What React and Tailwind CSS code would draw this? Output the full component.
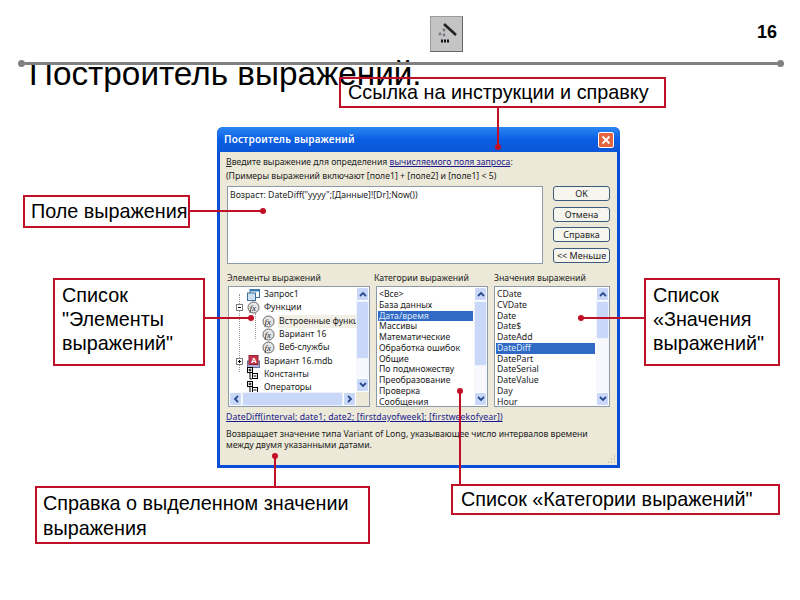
const dlgFont = 'font-["Noto_Sans","Liberation_Sans",sans-serif]'

function Callout({ className, children }) {
  return (
    <div className={`absolute z-20 whitespace-nowrap border-2 border-[#c00f26] text-[19.8px] text-black font-["Liberation_Sans",sans-serif] ${className}`}>
      {children}
    </div>
  )
}

function Dot({ className }) {
  return <div className={`absolute z-30 h-[6px] w-[6px] rounded-full bg-[#c00f26] ${className}`} />
}

function Wire({ className }) {
  return <div className={`absolute z-30 bg-[#c00f26] ${className}`} />
}

function Chevron({ dir }) {
  const d = {
    up: 'M2 7l3-3 3 3',
    down: 'M2 3l3 3 3-3',
    left: 'M7 2L4 5l3 3',
    right: 'M3 2l3 3-3 3'
  }[dir]
  return (
    <svg width="10" height="10" viewBox="0 0 10 10">
      <path d={d} fill="none" stroke="#2a4a8f" strokeWidth="1.8" />
    </svg>
  )
}

function ScrollBtn({ dir }) {
  return (
    <div className="flex h-[14px] w-[13px] shrink-0 items-center justify-center rounded-[2px] border border-white bg-[#c9d8f8]">
      <Chevron dir={dir} />
    </div>
  )
}

function VScroll({ thumb }) {
  return (
    <div className="flex w-[13px] shrink-0 flex-col bg-[#f7f8fe]">
      <ScrollBtn dir="up" />
      <div className="min-h-0 flex-1">
        <div className={`rounded-[2px] border border-[#eef2fd] bg-[#c9d8f8] ${thumb}`} />
      </div>
      <ScrollBtn dir="down" />
    </div>
  )
}

function FxIcon() {
  return (
    <svg width="13" height="13" viewBox="0 0 13 13" className="shrink-0">
      <circle cx="6.5" cy="6.5" r="5.5" fill="#e6e6e6" stroke="#666" />
      <text x="2.5" y="9.5" fontSize="9" fontStyle="italic" fontFamily="Liberation Serif, serif" fill="#222">fx</text>
    </svg>
  )
}

function QueryIcon() {
  return (
    <svg width="13" height="12" viewBox="0 0 13 12" className="shrink-0">
      <rect x="3" y="0.5" width="9.5" height="8" fill="#fff" stroke="#3c6f9f" />
      <rect x="0.5" y="4" width="8" height="7.5" fill="#cfe0ef" stroke="#3c6f9f" />
      <path d="M3 0.5h9.5v2H3z" fill="#3c7fb5" />
    </svg>
  )
}

function DbIcon() {
  return (
    <svg width="13" height="13" viewBox="0 0 13 13" className="shrink-0">
      <rect x="0.5" y="6" width="12" height="6.5" fill="#a9b4d6" stroke="#6a6f99" />
      <rect x="2" y="0.5" width="9" height="9" fill="#c8344a" stroke="#8f2238" />
      <text x="4" y="8" fontSize="8" fontWeight="700" fontFamily="Liberation Sans, sans-serif" fill="#fff">A</text>
    </svg>
  )
}

function BoxIcon() {
  return (
    <svg width="11" height="14" viewBox="0 0 11 14" className="shrink-0">
      <rect x="0.5" y="0.5" width="5" height="5" fill="#fff" stroke="#000" />
      <path d="M1.5 3h3M3 1.5v3" stroke="#000" />
      <rect x="5.5" y="6.5" width="5" height="5" fill="#fff" stroke="#000" />
      <path d="M6.5 9h3" stroke="#000" />
      <path d="M3 6v6h2" fill="none" stroke="#000" />
    </svg>
  )
}

function Toggle({ sign }) {
  return (
    <div className="relative z-10 flex h-[7px] w-[7px] shrink-0 items-center justify-center border border-[#808080] bg-white">
      <div className="h-px w-[3px] bg-black" />
      {sign === 'plus' && <div className="absolute h-[3px] w-px bg-black" />}
    </div>
  )
}

function TreeRow({ pad, toggle, icon, label, active }) {
  return (
    <div className={`flex h-[13.3px] items-center whitespace-nowrap ${pad}`}>
      {toggle && <div className="mr-[4px]"><Toggle sign={toggle} /></div>}
      {icon}
      <span className={`ml-[3px] pl-px pr-px ${active ? 'bg-[#f1efe6]' : ''}`}>{label}</span>
    </div>
  )
}

function ListBox({ items, selected, thumb, className }) {
  return (
    <div className={`flex border border-[#8d9aa8] bg-white ${className}`}>
      <div className="min-w-0 flex-1 overflow-hidden pb-px pl-px pr-px pt-[2px]">
        {items.map(item => (
          <div
            key={item}
            className={`h-[10.75px] whitespace-nowrap pl-px leading-[10.75px] ${item === selected ? 'bg-[#316ac5] text-[#dfe8fa]' : ''}`}
          >
            {item}
          </div>
        ))}
      </div>
      <VScroll thumb={thumb} />
    </div>
  )
}

function DlgButton({ children }) {
  return (
    <div className="flex h-[15px] w-[57px] items-center justify-center rounded-[3px] border border-[#3c5a7d] bg-[#f6f5ee] text-[9px] leading-none">
      {children}
    </div>
  )
}

function Dialog() {
  return (
    <div className={`absolute left-[217px] top-[127px] z-10 flex h-[341px] w-[403px] flex-col overflow-hidden rounded-t-[6px] bg-[#0a4fd6] text-[8.7px] text-[#222] ${dlgFont}`}>
      <div className="flex h-[25px] shrink-0 items-center justify-between bg-linear-to-b from-[#2c86f2] via-[#0b5fe4] to-[#0a55d8] pl-[7px] pr-[6px]">
        <span className="text-[10px] font-semibold tracking-[0.2px] text-white">Построитель выражений</span>
        <div className="flex h-[16px] w-[16px] items-center justify-center rounded-[2px] border border-white bg-[#e2653f]">
          <svg width="10" height="10" viewBox="0 0 10 10">
            <path d="M1.5 1.5l7 7M8.5 1.5l-7 7" stroke="#fff" strokeWidth="1.8" />
          </svg>
        </div>
      </div>
      <div className="relative mx-[3px] mb-[3px] flex min-h-0 flex-1 flex-col bg-[#ece9d8] pl-[6px] pr-[7px] pt-[3px]">
        <div className="h-[14px] leading-[14px]">
          <u>В</u>ведите выражение для определения <span className="text-[#1a1a8c] underline">вычисляемого поля запроса</span>:
        </div>
        <div className="h-[14px] leading-[14px]">(Примеры выражений включают [поле1] + [поле2] и [поле1] &lt; 5)</div>
        <div className="mt-[3px] flex gap-[10px] pl-px">
          <div className="h-[78px] flex-1 border border-[#8d9aa8] bg-white px-[2px] py-[2px] leading-[12px]">
            Возраст: DateDiff("yyyy";[Данные]![Dr];Now())
          </div>
          <div className="flex flex-col gap-[5.5px]">
            <DlgButton>OK</DlgButton>
            <DlgButton>Отмена</DlgButton>
            <DlgButton>Справка</DlgButton>
            <DlgButton>&lt;&lt; Меньше</DlgButton>
          </div>
        </div>
        <div className="mt-[8px] flex h-[14px] leading-[12px]">
          <span className="w-[147px] pl-px">Элементы выражений</span>
          <span className="w-[120px] pl-px">Категории выражений</span>
          <span className="pl-px">Значения выражений</span>
        </div>
        <div className="flex h-[121px] gap-[6px] pl-[2px]">
          <div className="flex w-[142px] flex-col border border-[#8d9aa8] bg-white">
            <div className="flex min-h-0 flex-1">
              <div className="relative min-w-0 flex-1 overflow-hidden pt-px">
                <div className="absolute left-[10px] top-[7px] h-[78px] border-l border-dotted border-[#999]" />
                <div className="absolute left-[26px] top-[26px] h-[26px] border-l border-dotted border-[#999]" />
                <TreeRow pad="pl-[18px]" icon={<QueryIcon />} label="Запрос1" />
                <TreeRow pad="pl-[7px]" toggle="minus" icon={<FxIcon />} label="Функции" />
                <TreeRow pad="pl-[33px]" icon={<FxIcon />} label="Встроенные функции" active />
                <TreeRow pad="pl-[33px]" icon={<FxIcon />} label="Вариант 16" />
                <TreeRow pad="pl-[33px]" icon={<FxIcon />} label="Веб-службы" />
                <TreeRow pad="pl-[7px]" toggle="plus" icon={<DbIcon />} label="Вариант 16.mdb" />
                <TreeRow pad="pl-[18px]" icon={<BoxIcon />} label={<span className="ml-[2px]">Константы</span>} />
                <TreeRow pad="pl-[18px]" icon={<BoxIcon />} label={<span className="ml-[2px]">Операторы</span>} />
              </div>
              <VScroll thumb="h-[58px]" />
            </div>
            <div className="flex h-[14px] shrink-0 bg-[#f7f8fe]">
              <ScrollBtn dir="left" />
              <div className="flex-1 rounded-[2px] border border-[#eef2fd] bg-[#c9d8f8]" />
              <ScrollBtn dir="right" />
              <div className="w-[13px] bg-[#ece9d8]" />
            </div>
          </div>
          <ListBox
            className="w-[112px]"
            thumb="h-[65px]"
            selected="Дата/время"
            items={['<Все>', 'База данных', 'Дата/время', 'Массивы', 'Математические', 'Обработка ошибок', 'Общие', 'По подмножеству', 'Преобразование', 'Проверка', 'Сообщения']}
          />
          <ListBox
            className="w-[116px]"
            thumb="h-[38px]"
            selected="DateDiff"
            items={['CDate', 'CVDate', 'Date', 'Date$', 'DateAdd', 'DateDiff', 'DatePart', 'DateSerial', 'DateValue', 'Day', 'Hour']}
          />
        </div>
        <div className="mt-[4px] h-[13px] leading-[13px] tracking-[0.1px] text-[#1a1a8c] underline">
          DateDiff(interval; date1; date2; [firstdayofweek]; [firstweekofyear])
        </div>
        <div className="mt-[5px] leading-[11px]">
          Возвращает значение типа Variant of Long, указывающее число интервалов времени
          <br />
          между двумя указанными датами.
        </div>
        <svg width="10" height="10" viewBox="0 0 10 10" className="absolute bottom-px right-px">
          <path d="M8 2h1M5 5h1M8 5h1M2 8h1M5 8h1M8 8h1" stroke="#a9a692" />
        </svg>
      </div>
    </div>
  )
}

function ToolIcon() {
  return (
    <div className="absolute left-[430px] top-[16px] flex h-[36px] w-[33px] items-center justify-center border border-[#9a9a9a] border-b-[#666] border-r-[#666] bg-[#c4c4c4]">
      <svg width="22" height="28" viewBox="0 0 22 28">
        <path d="M8 4l12 11" stroke="#222" strokeWidth="2.6" />
        <circle cx="8" cy="10" r="1.4" fill="#6f7884" />
        <circle cx="4" cy="14" r="1.4" fill="#6f7884" />
        <circle cx="8" cy="15" r="1.4" fill="#6f7884" />
        <path d="M5 21h2M8 21h2M11 21h2" stroke="#111" strokeWidth="3" />
      </svg>
    </div>
  )
}

export default function App() {
  return (
    <div className='relative h-[600px] w-[800px] overflow-hidden bg-white font-["Liberation_Sans",sans-serif] text-black'>
      <div className="absolute left-[727px] top-[20px] w-[50px] text-right text-[18px] font-bold leading-[24px]">16</div>
      <ToolIcon />

      <h1 className="absolute left-[29px] top-[52px] whitespace-nowrap text-[33.3px] font-normal leading-[44px]">
        Построитель выражений.
      </h1>
      <div className="absolute left-[18px] top-[60px] flex w-[766px] items-center">
        <div className="h-[7px] w-[7px] shrink-0 rounded-full bg-[#808080]" />
        <div className="h-[3px] flex-1 bg-[#808080]" />
        <div className="h-[7px] w-[7px] shrink-0 rounded-full bg-[#808080]" />
      </div>

      <Dialog />

      <Callout className="left-[339px] top-[77px] flex h-[31px] w-[327px] items-center pl-[7px]">
        Ссылка на инструкции и справку
      </Callout>
      <Callout className="left-[23px] top-[195px] flex h-[33px] w-[167px] items-center bg-white pl-[6px]">
        Поле выражения
      </Callout>
      <Callout className="left-[53px] top-[278px] h-[88px] w-[152px] bg-white pl-[7px] pt-[3px] leading-[24px]">
        Список
        <br />
        "Элементы
        <br />
        выражений"
      </Callout>
      <Callout className="left-[644px] top-[278px] h-[88px] w-[136px] bg-white pl-[7px] pt-[3px] leading-[24px]">
        Список
        <br />
        «Значения
        <br />
        выражений"
      </Callout>
      <Callout className="left-[35px] top-[486px] h-[58px] w-[335px] bg-white pl-[6px] pt-[3px] leading-[25px]">
        Справка о выделенном значении
        <br />
        выражения
      </Callout>
      <Callout className="left-[451px] top-[484px] flex h-[31px] w-[329px] items-center bg-white pl-[8px]">
        Список «Категории выражений"
      </Callout>

      <Wire className="left-[190px] top-[210px] h-[2px] w-[73px]" />
      <Dot className="left-[260px] top-[208px]" />
      <Wire className="left-[497px] top-[108px] h-[39px] w-[2px]" />
      <Dot className="left-[495px] top-[144px]" />
      <Wire className="left-[205px] top-[317px] h-[2px] w-[47px]" />
      <Dot className="left-[248px] top-[315px]" />
      <Wire className="left-[581px] top-[317px] h-[2px] w-[63px]" />
      <Dot className="left-[578px] top-[315px]" />
      <Wire className="left-[274px] top-[455px] h-[31px] w-[2px]" />
      <Dot className="left-[272px] top-[453px]" />
      <Wire className="left-[459px] top-[391px] h-[93px] w-[2px]" />
      <Dot className="left-[457px] top-[388px]" />
    </div>
  )
}
